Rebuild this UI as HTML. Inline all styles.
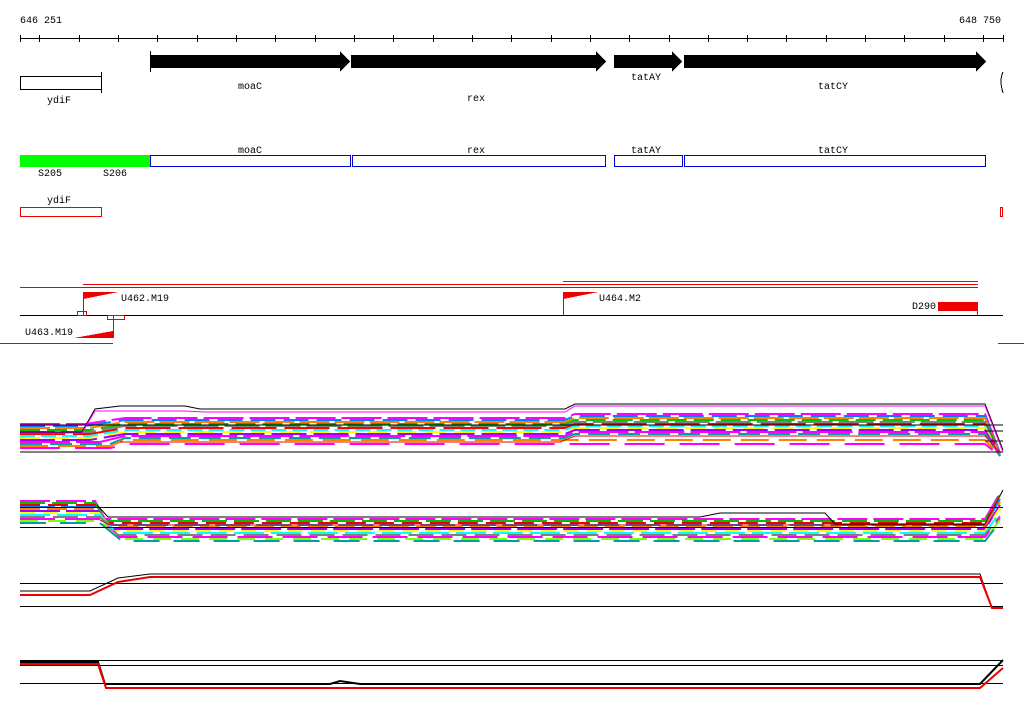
<!DOCTYPE html>
<html><head><meta charset="utf-8"><style>
html,body{margin:0;padding:0;background:#fff;width:1024px;height:714px;overflow:hidden}
text{font-family:"Liberation Mono",monospace;font-size:10px;fill:#000}
</style></head><body>
<svg width="1024" height="714" viewBox="0 0 1024 714" xmlns="http://www.w3.org/2000/svg" shape-rendering="crispEdges">
<text x="20" y="23">646 251</text>
<text x="959" y="23">648 750</text>
<line x1="20" y1="38.5" x2="1003" y2="38.5" stroke="#000"/>
<g stroke="#000">
<path d="M20.5 35v7M39.5 35v7M79.5 35v7M118.5 35v7M157.5 35v7M197.5 35v7M236.5 35v7M275.5 35v7M315.5 35v7M354.5 35v7M393.5 35v7M433.5 35v7M472.5 35v7M511.5 35v7M551.5 35v7M590.5 35v7M629.5 35v7M669.5 35v7M708.5 35v7M747.5 35v7M786.5 35v7M826.5 35v7M865.5 35v7M904.5 35v7M944.5 35v7M983.5 35v7M1003.5 35v7"/>
</g>
<g fill="#000">
<rect x="150" y="51" width="1" height="21"/>
<path d="M150 55H340V51L350 61.5L340 72V68H150Z"/>
<path d="M351 55H596V51L606 61.5L596 72V68H351Z"/>
<path d="M614 55H672V51L682 61.5L672 72V68H614Z"/>
<path d="M684 55H976V51L986 61.5L976 72V68H684Z"/>
</g>
<path d="M1003 72 Q999 80 1003 93" stroke="#000" fill="none"/>
<rect x="20.5" y="76.5" width="81" height="13" fill="none" stroke="#000"/>
<line x1="101.5" y1="72" x2="101.5" y2="93" stroke="#000"/>
<text x="47" y="103">ydiF</text>
<text x="238" y="89">moaC</text>
<text x="467" y="101">rex</text>
<text x="631" y="80">tatAY</text>
<text x="818" y="89">tatCY</text>
<rect x="20" y="155" width="130" height="12" fill="#00ff00"/>
<g fill="none" stroke="#0000dd">
<rect x="150.5" y="155.5" width="200" height="11"/>
<rect x="352.5" y="155.5" width="253" height="11"/>
<rect x="614.5" y="155.5" width="68" height="11"/>
<rect x="684.5" y="155.5" width="301" height="11"/>
</g>
<text x="238" y="153">moaC</text>
<text x="467" y="153">rex</text>
<text x="631" y="153">tatAY</text>
<text x="818" y="153">tatCY</text>
<text x="38" y="176">S205</text>
<text x="103" y="176">S206</text>
<text x="47" y="203">ydiF</text>
<rect x="20.5" y="207.5" width="81" height="9" fill="none" stroke="#e00"/>
<rect x="1000.5" y="207.5" width="2" height="9" fill="none" stroke="#e00"/>
<g stroke="#e00">
<line x1="563" y1="281.5" x2="978" y2="281.5"/>
<line x1="83" y1="284.5" x2="978" y2="284.5"/>
<line x1="20" y1="287.5" x2="978" y2="287.5"/>
<line x1="0" y1="343.5" x2="113" y2="343.5"/>
<line x1="998" y1="343.5" x2="1024" y2="343.5"/>
<line x1="83.5" y1="292" x2="83.5" y2="315"/>
<line x1="113.5" y1="315" x2="113.5" y2="338"/>
<line x1="563.5" y1="292" x2="563.5" y2="315"/>
<line x1="977.5" y1="302" x2="977.5" y2="315"/>
</g>
<line x1="20" y1="315.5" x2="1003" y2="315.5" stroke="#000"/>
<g fill="#e00">
<path d="M83 292H118L83 299Z"/>
<path d="M113 331V338H74Z"/>
<path d="M563 292H598L563 299Z"/>
<rect x="938" y="302" width="40" height="9"/>
</g>
<g fill="none" stroke="#e00">
<rect x="77.5" y="311.5" width="9" height="4"/>
<rect x="107.5" y="315.5" width="17" height="4"/>
</g>
<text x="121" y="301">U462.M19</text>
<text x="25" y="335">U463.M19</text>
<text x="599" y="301">U464.M2</text>
<text x="912" y="309">D290</text>
<!-- track 1 -->
<g fill="none" stroke-width="2" shape-rendering="auto">
<path d="M20 424H85L125 418H565L575 414H985L1000 453" stroke="#ff00ff" stroke-dasharray="40 6"/>
<path d="M20 426H85L125 420H565L575 416H985L1000 453" stroke="#0080ff" stroke-dasharray="25 8"/>
<path d="M20 428H88L125 422H565L575 418H985L1000 454" stroke="#ff8000" stroke-dasharray="30 5"/>
<path d="M20 430H90L125 424H565L575 420H985L1000 454" stroke="#00c000" stroke-dasharray="20 7"/>
<path d="M20 432H90L125 426H565L575 422H985L1000 454" stroke="#808080" stroke-dasharray="35 6"/>
<path d="M20 434H90L125 428H565L575 424H985L1000 455" stroke="#ff0000" stroke-dasharray="45 8"/>
<path d="M20 436H90L125 430H565L575 426H985L1000 455" stroke="#00ffff" stroke-dasharray="15 6"/>
<path d="M20 438H90L125 432H565L575 428H985L1000 455" stroke="#ffff00" stroke-dasharray="20 9"/>
<path d="M20 440H90L125 434H565L575 430H985L1000 456" stroke="#a000ff" stroke-dasharray="35 7"/>
<path d="M20 442H100L125 436H565L575 432H985L1000 456" stroke="#ff00ff" stroke-dasharray="50 6"/>
<path d="M20 444H110L125 438H565L575 434H985L1000 456" stroke="#00a0a0" stroke-dasharray="22 8"/>
<path d="M20 446H110L125 440H985L1000 456" stroke="#ff8000" stroke-dasharray="28 10"/>
<path d="M20 448H110L130 444H985L1000 456" stroke="#ff00ff" stroke-dasharray="40 15"/>
</g>
<g fill="none" stroke="#000" shape-rendering="auto">
<path d="M20 432H82L95 409L120 406H185L200 409H565L575 404H985L1003 450"/>
<path d="M20 452H1003"/>
<path d="M20 425H1003"/>
<path d="M985 431H1003M985 441H1003"/>
</g>
<path d="M20 433H82L95 411H185L205 412H565L575 406H985L1003 452" fill="none" stroke="#ff00ff" shape-rendering="auto"/>
<path d="M120 442H560L575 436H985L1000 452" fill="none" stroke="#e00" shape-rendering="auto"/>
<!-- track 2 -->
<g fill="none" stroke-width="2" shape-rendering="auto">
<path d="M20 501H95L105 519H985L1000 493" stroke="#ff00ff" stroke-dasharray="30 6"/>
<path d="M20 503H95L106 521H985L1000 495" stroke="#00c000" stroke-dasharray="25 7"/>
<path d="M20 505H95L106 523H985L1000 497" stroke="#e00" stroke-dasharray="20 8"/>
<path d="M20 507H96L108 525H985L1000 499" stroke="#0080ff" stroke-dasharray="35 6"/>
<path d="M20 509H97L110 527H985L1000 502" stroke="#ff8000" stroke-dasharray="20 7"/>
<path d="M20 511H98L112 529H985L1000 505" stroke="#a000ff" stroke-dasharray="40 6"/>
<path d="M20 513H99L114 531H985L1000 508" stroke="#ffff00" stroke-dasharray="15 8"/>
<path d="M20 515H100L116 533H985L1000 512" stroke="#00ffff" stroke-dasharray="30 7"/>
<path d="M20 517H100L118 535H985L1000 516" stroke="#808080" stroke-dasharray="25 8"/>
<path d="M20 519H100L118 537H985L1000 518" stroke="#ff00ff" stroke-dasharray="35 10"/>
<path d="M20 521H100L120 539H985L1000 520" stroke="#80ff00" stroke-dasharray="18 10"/>
<path d="M20 523H100L122 541H985L1000 522" stroke="#00a0a0" stroke-dasharray="26 14"/>
</g>
<g fill="none" stroke="#000" shape-rendering="auto">
<path d="M20 507.5H1003M20 527.5H1003"/>
<path d="M97 505L108 517H700L720 513H825L835 524H985L1003 490"/>
</g>
<path d="M100 520L110 525H985L1000 495" fill="none" stroke="#e00" shape-rendering="auto"/>
<!-- track 3 -->
<g fill="none" stroke="#000">
<path d="M20 583.5H1003M20 606.5H1003"/>
</g>
<g fill="none" shape-rendering="auto">
<path d="M20 591H90L118 578L150 574H980L990 602" stroke="#000"/>
<path d="M20 595H90L118 582L150 577H980L992 608H1003" stroke="#e00" stroke-width="2"/>
</g>
<!-- track 4 -->
<g fill="none" stroke="#000">
<path d="M20 660.5H1003M20 665.5H1003M20 683.5H1003"/>
</g>
<g fill="none" shape-rendering="auto">
<path d="M20 662H98L105 684H330L340 681L360 684H980L1003 660" stroke="#000" stroke-width="2"/>
<path d="M20 664H98L106 688H980L1003 668" stroke="#e00" stroke-width="2"/>
</g>
</svg>
</body></html>
